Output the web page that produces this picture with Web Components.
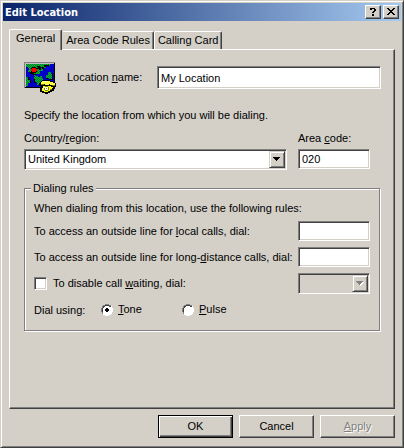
<!DOCTYPE html>
<html lang="en">
<head>
<meta charset="utf-8">
<title>Edit Location</title>
<style>
  :root { --face: #d4d0c8; --dark: #404040; --shade: #808080; --light: #ffffff; }
  body { margin: 0; background: var(--face); color: #000; font: 11px/13px "Liberation Sans", Arial, sans-serif; }
  .identity { display: flex; gap: 11px; align-items: flex-start; }
  .identity win-field { flex: 1; margin-top: 4px; --label-width: 79px; }
  p { margin: 0; }
  .intro { margin-top: 15px; }
  .place { display: grid; grid-template-columns: 1fr 72px; column-gap: 11px; margin: 10px 11px 12px 0; align-items: start; }
  .using { display: flex; margin-top: 3px; }
  .using span { width: 67px; padding-top: 1px; }
  .using win-option { width: 81px; }
</style>
</head>
<body>
<win-dialog>
  <win-title slot="title">Edit Location</win-title>
  <win-tabs slot="tabs" names="General|Area Code Rules|Calling Card"></win-tabs>
  <div class="identity">
    <map-phone-icon></map-phone-icon>
    <win-field value="My Location" height="23" inline>Location <u>n</u>ame:</win-field>
  </div>
  <p class="intro">Specify the location from which you will be dialing.</p>
  <div class="place">
    <win-combo value="United Kingdom">Country/<u>r</u>egion:</win-combo>
    <win-field value="020">Area <u>c</u>ode:</win-field>
  </div>
  <win-group>
    <span slot="legend">Dialing rules</span>
    <p>When dialing from this location, use the following rules:</p>
    <win-field inline end>To access an outside line for <u>l</u>ocal calls, dial:</win-field>
    <win-field inline end>To access an outside line for long-<u>d</u>istance calls, dial:</win-field>
    <win-waiting>To disable call <u>w</u>aiting, dial:</win-waiting>
    <div class="using"><span>Dial using:</span><win-option checked><u>T</u>one</win-option><win-option><u>P</u>ulse</win-option></div>
  </win-group>
  <win-button slot="actions" primary>OK</win-button>
  <win-button slot="actions">Cancel</win-button>
  <win-button slot="actions" disabled><u>A</u>pply</win-button>
</win-dialog>

<script>
const base = `
  * { box-sizing: border-box; }
  button, input, select { font: inherit; color: inherit; margin: 0; border-radius: 0; appearance: none; outline: 0; }
  .sunk { border: 1px solid; border-color: var(--shade) var(--light) var(--light) var(--shade);
    box-shadow: inset 1px 1px var(--dark), inset -1px -1px var(--face); background: #fff; }
  .raised { border: 1px solid; border-color: var(--light) var(--dark) var(--dark) var(--light);
    box-shadow: inset -1px -1px var(--shade); background: var(--face); }
`;
const comboBox = `
  .combo { display: grid; position: relative; height: 21px; }
  .combo select { width: 100%; height: 21px; padding: 0 20px 0 3px; opacity: 1; }
  .combo select:disabled { background: var(--face); }
  .arrow { position: absolute; top: 2px; right: 2px; bottom: 2px; width: 16px; display: grid; place-items: center; pointer-events: none;
    border: 1px solid; border-color: var(--face) var(--dark) var(--dark) var(--face);
    box-shadow: inset 1px 1px var(--light), inset -1px -1px var(--shade); background: var(--face); }
`;
const arrow = off => `<span class="arrow"><svg width="8" height="5" shape-rendering="crispEdges">${off ? '<path d="M1 1h7v1h-1v1h-1v1h-1v1h-1v-1h-1v-1h-1v-1h-1z" fill="#fff"/>' : ''}<path d="M0 0h7v1h-1v1h-1v1h-1v1h-1v-1h-1v-1h-1v-1h-1z" fill="${off ? '#808080' : '#000'}"/></svg></span>`;

function define(name, render) {
  customElements.define(name, class extends HTMLElement {
    connectedCallback() {
      if (this.shadowRoot) return;
      const t = document.createElement('template');
      t.innerHTML = render(this);
      this.attachShadow({ mode: 'open' }).append(t.content.cloneNode(true));
    }
  });
}

define('win-dialog', () => `<style>${base}
  :host { display: flex; flex-direction: column; box-sizing: border-box; min-height: 100vh; padding: 2px;
    border: 1px solid; border-color: var(--face) var(--dark) var(--dark) var(--face);
    box-shadow: inset 1px 1px var(--light), inset -1px -1px var(--shade); background: var(--face); }
  .body { flex: 1; display: flex; flex-direction: column; padding: 8px 6px 7px; }
  .page { flex: 1; padding: 12px 13px 12px 14px; }
  .actions { display: flex; justify-content: flex-end; gap: 6px; padding-top: 6px; }
</style>
<slot name="title"></slot>
<div class="body">
  <slot name="tabs"></slot>
  <div class="page raised" role="tabpanel" aria-label="General"><slot></slot></div>
  <div class="actions"><slot name="actions"></slot></div>
</div>`);

define('win-title', () => `<style>${base}
  :host { display: flex; align-items: center; height: 18px; padding: 0 2px;
    background: linear-gradient(90deg, #0a246a, #a6caf0); color: #fff; font: bold 11px/13px "DejaVu Sans Condensed", "DejaVu Sans", sans-serif; }
  .name { flex: 1; }
  button { width: 16px; height: 14px; padding: 0; display: grid; place-items: center; color: #000; }
  button + button { margin-left: 2px; }
</style>
<span class="name"><slot></slot></span>
<button class="raised" aria-label="Help"><svg width="12" height="10" shape-rendering="crispEdges"><path d="M3 1h5v1h1v2h-1v1h-1v1h-2v-1h1v-1h1v-2h-2v1h-2zM5 7h2v2h-2z"/></svg></button>
<button class="raised" aria-label="Close"><svg width="12" height="10" shape-rendering="crispEdges"><path d="M2 1h2v1h1v1h2v-1h1v-1h2v1h-1v1h-1v1h-1v1h1v1h1v1h1v1h-2v-1h-1v-1h-2v1h-1v1h-2v-1h1v-1h1v-1h1v-1h-1v-1h-1v-1h-1z"/></svg></button>`);

define('win-tabs', el => `<style>${base}
  :host { display: flex; align-items: flex-end; height: 20px; }
  button { height: 18px; padding: 0 3px 1px; background: var(--face); border: 1px solid; border-bottom: 0;
    border-color: var(--light) var(--dark) var(--face) var(--light); box-shadow: inset -1px 0 var(--shade); border-radius: 2px 2px 0 0; white-space: nowrap; }
  button:not([aria-selected=true]) { border-left-color: transparent; }
  button:last-child { border-left-color: var(--light); }
  button[aria-selected=true] { height: 21px; padding: 0 6px 3px; margin-bottom: -1px; z-index: 1; position: relative; }
</style>
${el.getAttribute('names').split('|').map((n, i) => `<button role="tab" aria-selected="${i === 0}">${n}</button>`).join('')}`);

define('win-field', el => {
  const inline = el.hasAttribute('inline'), end = el.hasAttribute('end');
  const dir = !inline ? 'grid-template-columns: 1fr; row-gap: 4px;'
    : end ? 'grid-template-columns: 1fr 72px; align-items: center;'
    : 'grid-template-columns: var(--label-width) 1fr; column-gap: 11px; align-items: center;';
  return `<style>${base}
  :host { display: grid; ${dir} }
  input { width: 100%; min-width: 0; height: ${el.getAttribute('height') || 20}px; padding: 0 3px; }
</style>
<label for="f"><slot></slot></label><input id="f" class="sunk" type="text" value="${el.getAttribute('value') || ''}">`;
});

define('win-combo', el => `<style>${base}${comboBox}
  :host { display: grid; row-gap: 4px; }
</style>
<label for="s"><slot></slot></label>
<div class="combo"><select id="s" class="sunk"><option>${el.getAttribute('value')}</option></select>${arrow(false)}</div>`);

define('win-waiting', () => `<style>${base}${comboBox}
  :host { display: grid; grid-template-columns: 1fr 72px; align-items: center; }
  label { display: flex; align-items: center; gap: 6px; }
  input { width: 13px; height: 13px; }
  input:checked { background: conic-gradient(#000 0 0) center / 5px 5px no-repeat #fff; }
</style>
<label><input type="checkbox" class="sunk"><span><slot></slot></span></label>
<div class="combo"><select class="sunk" disabled aria-label="Call waiting code"></select>${arrow(true)}</div>`);

define('win-option', el => `<style>${base}
  label { display: flex; align-items: center; gap: 5px; }
  .dial { display: grid; width: 12px; height: 12px; }
  .dial > * { grid-area: 1 / 1; }
  input { width: 12px; height: 12px; opacity: 0; }
  svg .dot { display: none; }
  input:checked + svg .dot { display: block; }
</style>
<label><span class="dial"><input type="radio" ${el.hasAttribute('checked') ? 'checked' : ''}><svg width="12" height="12" shape-rendering="crispEdges">
  <path fill="#fff" d="M4 1h4v1h2v2h1v4h-1v2h-2v1h-4v-1h-2v-2h-1v-4h1v-2h2z"/>
  <path fill="#808080" d="M4 0h4v1h2v1h-2v-1h-4v1h-2v2h-1v4h1v2h-1v-2h-1v-4h1v-2h1v-1h2z"/>
  <path fill="#404040" d="M4 1h4v1h2v1h-2v-1h-4v1h-1v1h-1v4h-1v-4h1v-2h2z"/>
  <path fill="#fff" d="M10 2h1v2h1v4h-1v2h-1v1h-2v1h-4v-1h-2v-1h2v1h4v-1h2v-2h1v-4h-1z"/>
  <path class="dot" d="M5 4h2v1h1v2h-1v1h-2v-1h-1v-2h1z"/></svg></span><span><slot></slot></span></label>`);

define('win-group', () => `<style>${base}
  :host { display: block; }
  fieldset { min-width: 0; margin: 0 1px 0 0; padding: 7px 9px 13px; border: 1px solid var(--shade);
    box-shadow: inset 1px 1px var(--light), 1px 1px var(--light); }
  legend { margin-left: -3px; padding: 0 2px; background: var(--face); }
  .rows { display: flex; flex-direction: column; gap: 6px; }
</style>
<fieldset><legend><slot name="legend"></slot></legend><div class="rows"><slot></slot></div></fieldset>`);

define('win-button', el => `<style>${base}
  :host { display: block; width: 75px; }
  button { width: 100%; height: 23px; padding: 0; }
  .primary { border-color: #000; box-shadow: inset 1px 1px var(--light), inset -1px -1px var(--dark), inset -2px -2px var(--shade); }
  button:disabled { color: var(--shade); text-shadow: 1px 1px var(--light); }
</style>
<button class="raised ${el.hasAttribute('primary') ? 'primary' : ''}" ${el.hasAttribute('disabled') ? 'disabled' : ''}><slot></slot></button>`);

define('map-phone-icon', () => `<style>:host { display: block; width: 32px; height: 32px; } svg { display: block; }</style>
<svg width="32" height="32" viewBox="0 0 32 32" shape-rendering="crispEdges" aria-hidden="true">
  <defs>
    <pattern id="land" width="2" height="2" patternUnits="userSpaceOnUse"><rect width="2" height="2" fill="#00b050"/><rect width="1" height="1" fill="#008010"/><rect x="1" y="1" width="1" height="1" fill="#008010"/></pattern>
    <pattern id="sea" width="2" height="2" patternUnits="userSpaceOnUse"><rect width="2" height="2" fill="#0000e8"/><rect width="1" height="1" fill="#0000a8"/><rect x="1" y="1" width="1" height="1" fill="#0000a8"/></pattern>
  </defs>
  <path fill="#808080" d="M0 0h31v26h-31z"/><path fill="#c0c0c0" d="M1 1h29v24h-29z"/><path d="M30 1h1v25h-30v-1h29z"/>
  <path fill="url(#sea)" d="M2 2h28v23h-28z"/>
  <path fill="url(#land)" d="M2 2h24v2h-4v2h-3v3h-3v3h-4v2h-2v-2h-3v-2h-3v-2h-2z"/>
  <path d="M13 4h3v1h1v3h-2v-1h-2v-1h1v-1h-1zM20 3h5v1h-3v1h-2v2h-2v-2h2zM6 10h2v1h2v1h2v1h-3v-1h-3z"/>
  <path fill="url(#sea)" d="M2 5h2v1h1v2h-3zM17 5h1v1h-1z"/>
  <path fill="url(#land)" d="M2 15h2v3h2v3h-2v3h-2zM11 14h3v1h2v-1h2v2h1v3h-2v2h-1v2h-3v-3h-2v-2h-1v-3h1zM24 10h3v2h1v5h-3v-1h-3v-3h2z"/>
  <path d="M4 15h1v2h1v1h-2zM6 18h1v3h-1zM10 17h1v3h1v1h-2zM17 19h1v1h-1v2h-1v-1h1zM28 11h1v7h-4v-1h3zM22 16h2v1h-2z"/>
  <path d="M8 5h4v1h1v4h-1v1h-4v-1h-1v-4h1z"/>
  <path fill="#ff0000" d="M8 6h4v4h-4zM7 7h6v2h-6z"/>
  <path d="M18 18h8v1h3v1h2v1h1v4h-1v2h-1v2h-2v1h-2v1h-2v1h-3v-1h-3v-1h-2v-4h1v-2h-2v-3h1v-1h2z"/>
  <path fill="#ffff40" d="M18 19h8v1h3v1h2v3h-3v-1h-2v-1h-1v1h-4v-1h-1v1h-3v-3h1z"/>
  <path fill="#ffff00" d="M19 24h8v1h2v1h-1v2h-2v1h-2v1h-4v-1h-2v-3h1z"/>
  <path fill="#ffffc0" d="M19 19h5v1h-5zM19 25h1v3h-1z"/>
  <path fill="#808000" d="M17 22h3v1h-3zM28 23h3v1h-3zM21 24h3v1h-3zM20 26h1v2h-1zM24 25h1v3h-1zM21 28h3v1h-3zM26 27h2v1h-2z"/>
  <path fill="#fff" d="M21 25h3v3h-3z"/><path fill="#808000" d="M22 26h1v1h-1z"/>
</svg>`);

/* Choosing one dialing method releases the other. */
document.querySelectorAll('win-option').forEach(o => o.shadowRoot.addEventListener('change', () => {
  document.querySelectorAll('win-option').forEach(p => { if (p !== o) p.shadowRoot.querySelector('input').checked = false; });
}));
</script>
</body>
</html>
